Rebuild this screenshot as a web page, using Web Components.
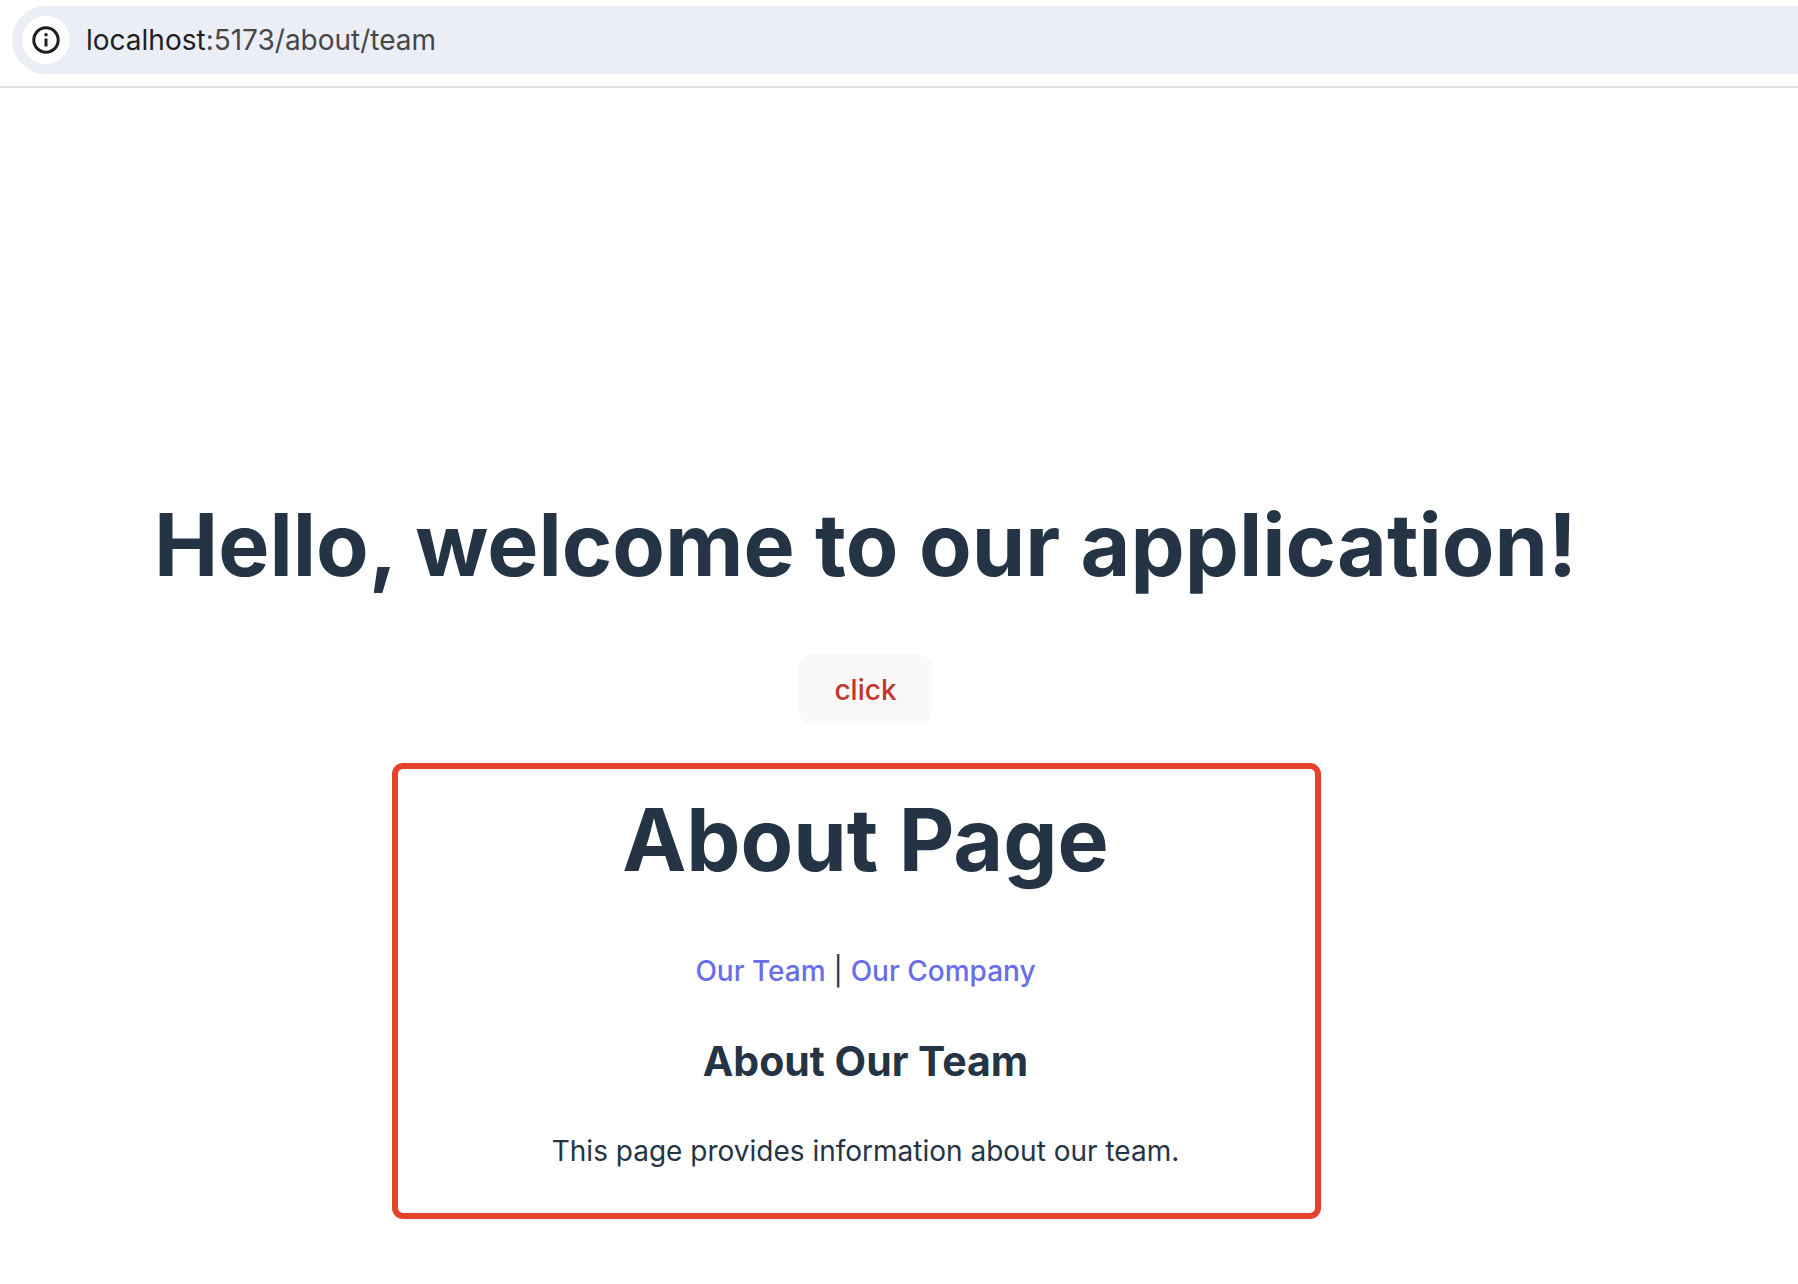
<!DOCTYPE html>
<html lang="en">
<head>
<meta charset="utf-8">
<meta name="viewport" content="width=device-width, initial-scale=1">
<title>About – Our Team</title>
<style>
  body {
    margin: 0;
    background: #fff;
    color: #243445;
    font-family: Inter, "Liberation Sans", sans-serif;
    font-size: 28px;
    line-height: 42px;
  }
</style>
</head>
<body>
<address-bar><span slot="host">localhost</span><span slot="path">:5173/about/team</span></address-bar>
<app-shell>
  <page-title>Hello, welcome to our application!</page-title>
  <click-button>click</click-button>
  <about-page></about-page>
</app-shell>

<script>
function define(name, html) {
  const template = document.createElement('template');
  template.innerHTML = html;
  customElements.define(name, class extends HTMLElement {
    constructor() {
      super();
      this.attachShadow({ mode: 'open' }).append(template.content.cloneNode(true));
    }
  });
}

define('address-bar', `
  <style>
    :host { display: block; padding: 6px 0 12px 12px; border-bottom: 2px solid #dfe1e3; }
    .field { display: flex; align-items: center; gap: 16px; height: 68px; padding-left: 10px;
      box-sizing: border-box; border-radius: 34px 0 0 34px; background: #ebeef7; }
    button { display: flex; align-items: center; justify-content: center; width: 48px; height: 48px;
      padding: 0; border: 0; border-radius: 50%; background: #fff; color: #1f1f1f; }
    .url { flex: 1; outline: 0; color: #1f1f1f; white-space: nowrap; }
    .path { color: #474747; }
  </style>
  <div class="field">
    <button type="button" aria-label="View site information">
      <svg width="28" height="28" viewBox="0 0 28 28" fill="none" stroke="currentColor" aria-hidden="true">
        <circle cx="14" cy="14" r="12.2" stroke-width="3"/>
        <path d="M14 12.5v8" stroke-width="3"/>
        <circle cx="14" cy="8.8" r="1.8" fill="currentColor" stroke="none"/>
      </svg>
    </button>
    <div class="url" role="textbox" contenteditable="true" spellcheck="false" aria-label="Address"><slot name="host"></slot><span class="path"><slot name="path"></slot></span></div>
  </div>`);

define('app-shell', `
  <style>
    :host { display: block; }
    main { display: flex; flex-direction: column; align-items: center; padding: 407px 67px 64px 0; }
  </style>
  <main><slot></slot></main>`);

define('page-title', `
  <style>
    :host { display: block; text-align: center; }
    h1 { margin: 0; font-size: 86px; line-height: 100px; font-weight: 700; }
  </style>
  <h1><slot></slot></h1>`);

define('click-button', `
  <style>
    :host { display: block; margin: 59px 0 39px; }
    button { display: block; padding: 15px 35px 13px; border: 0; border-radius: 14px; background: #f9f9f9;
      color: #c5352b; font: inherit; font-weight: 500; }
  </style>
  <button type="button"><slot></slot></button>`);

define('nav-link', `
  <style>
    :host { display: inline; }
    a { color: #696ee8; font-weight: 500; text-decoration: none; }
  </style>
  <a href="#"><slot></slot></a>`);

define('team-page', `
  <style>
    :host { display: block; }
    h2 { margin: 45px 0; font-size: 41px; line-height: 48px; font-weight: 700; }
    p { margin: 0; }
  </style>
  <h2>About Our Team</h2>
  <p>This page provides information about our team.</p>`);

define('about-page', `
  <style>
    :host { display: block; box-sizing: border-box; width: 100%; max-width: 929px; margin-right: 19px;
      padding: 21px 0 41px 19px; border: 6px solid #e5422b; border-radius: 11px; text-align: center; }
    nav { margin-top: 60px; }
  </style>
  <page-title>About Page</page-title>
  <nav><nav-link>Our Team</nav-link> | <nav-link>Our Company</nav-link></nav>
  <team-page></team-page>`);
</script>
</body>
</html>
